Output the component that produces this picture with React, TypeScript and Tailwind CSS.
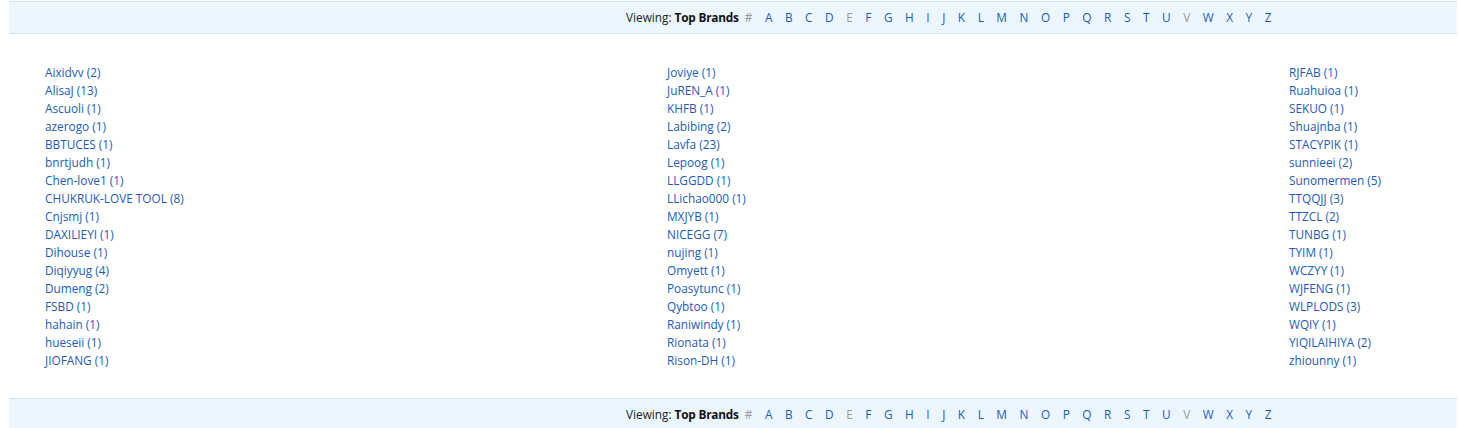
import React from 'react'

const LETTERS = ['#', 'A', 'B', 'C', 'D', 'E', 'F', 'G', 'H', 'I', 'J', 'K', 'L', 'M', 'N', 'O', 'P', 'Q', 'R', 'S', 'T', 'U', 'V', 'W', 'X', 'Y', 'Z']
const DISABLED = new Set(['#', 'E', 'V'])

const COLUMNS: string[][] = [
  ['Aixidvv (2)', 'AlisaJ (13)', 'Ascuoli (1)', 'azerogo (1)', 'BBTUCES (1)', 'bnrtjudh (1)', 'Chen-love1 (1)', 'CHUKRUK-LOVE TOOL (8)', 'Cnjsmj (1)', 'DAXILIEYI (1)', 'Dihouse (1)', 'Diqiyyug (4)', 'Dumeng (2)', 'FSBD (1)', 'hahain (1)', 'hueseii (1)', 'JIOFANG (1)'],
  ['Joviye (1)', 'JuREN_A (1)', 'KHFB (1)', 'Labibing (2)', 'Lavfa (23)', 'Lepoog (1)', 'LLGGDD (1)', 'LLichao000 (1)', 'MXJYB (1)', 'NICEGG (7)', 'nujing (1)', 'Omyett (1)', 'Poasytunc (1)', 'Qybtoo (1)', 'Raniwindy (1)', 'Rionata (1)', 'Rison-DH (1)'],
  ['RJFAB (1)', 'Ruahuioa (1)', 'SEKUO (1)', 'Shuajnba (1)', 'STACYPIK (1)', 'sunnieei (2)', 'Sunomermen (5)', 'TTQQJJ (3)', 'TTZCL (2)', 'TUNBG (1)', 'TYIM (1)', 'WCZYY (1)', 'WJFENG (1)', 'WLPLODS (3)', 'WQIY (1)', 'YIQILAIHIYA (2)', 'zhiounny (1)'],
]

function LetterBar() {
  return (
    <div className="h-[33px] bg-[#ebf6fe] border-y border-[#cfe6f5] flex items-center pl-[617px] text-[11.8px]">
      <span className="text-[#222]">Viewing: <b className="font-bold text-[#111] tracking-[-0.2px]">Top Brands</b></span>
      <div className="flex items-center gap-[12.55px] ml-[6px]">
        {LETTERS.map(l => (
          <span key={l} className={DISABLED.has(l) ? 'text-[#999]' : 'text-[#1a5cb8]'}>{l}</span>
        ))}
      </div>
    </div>
  )
}

export default function App() {
  return (
    <div className="bg-white ml-[9px] mr-[1px] pt-[1px] font-['Open_Sans',sans-serif]">
      <LetterBar />
      <div className="grid grid-cols-[622px_622px_1fr] pl-[36px] pt-[29px] pb-[29px]">
        {COLUMNS.map((col, i) => (
          <ul key={i} className="text-[11.8px] leading-[18px]">
            {col.map(b => (
              <li key={b}><a className="text-[#1a5cb8]">{b}</a></li>
            ))}
          </ul>
        ))}
      </div>
      <LetterBar />
    </div>
  )
}
